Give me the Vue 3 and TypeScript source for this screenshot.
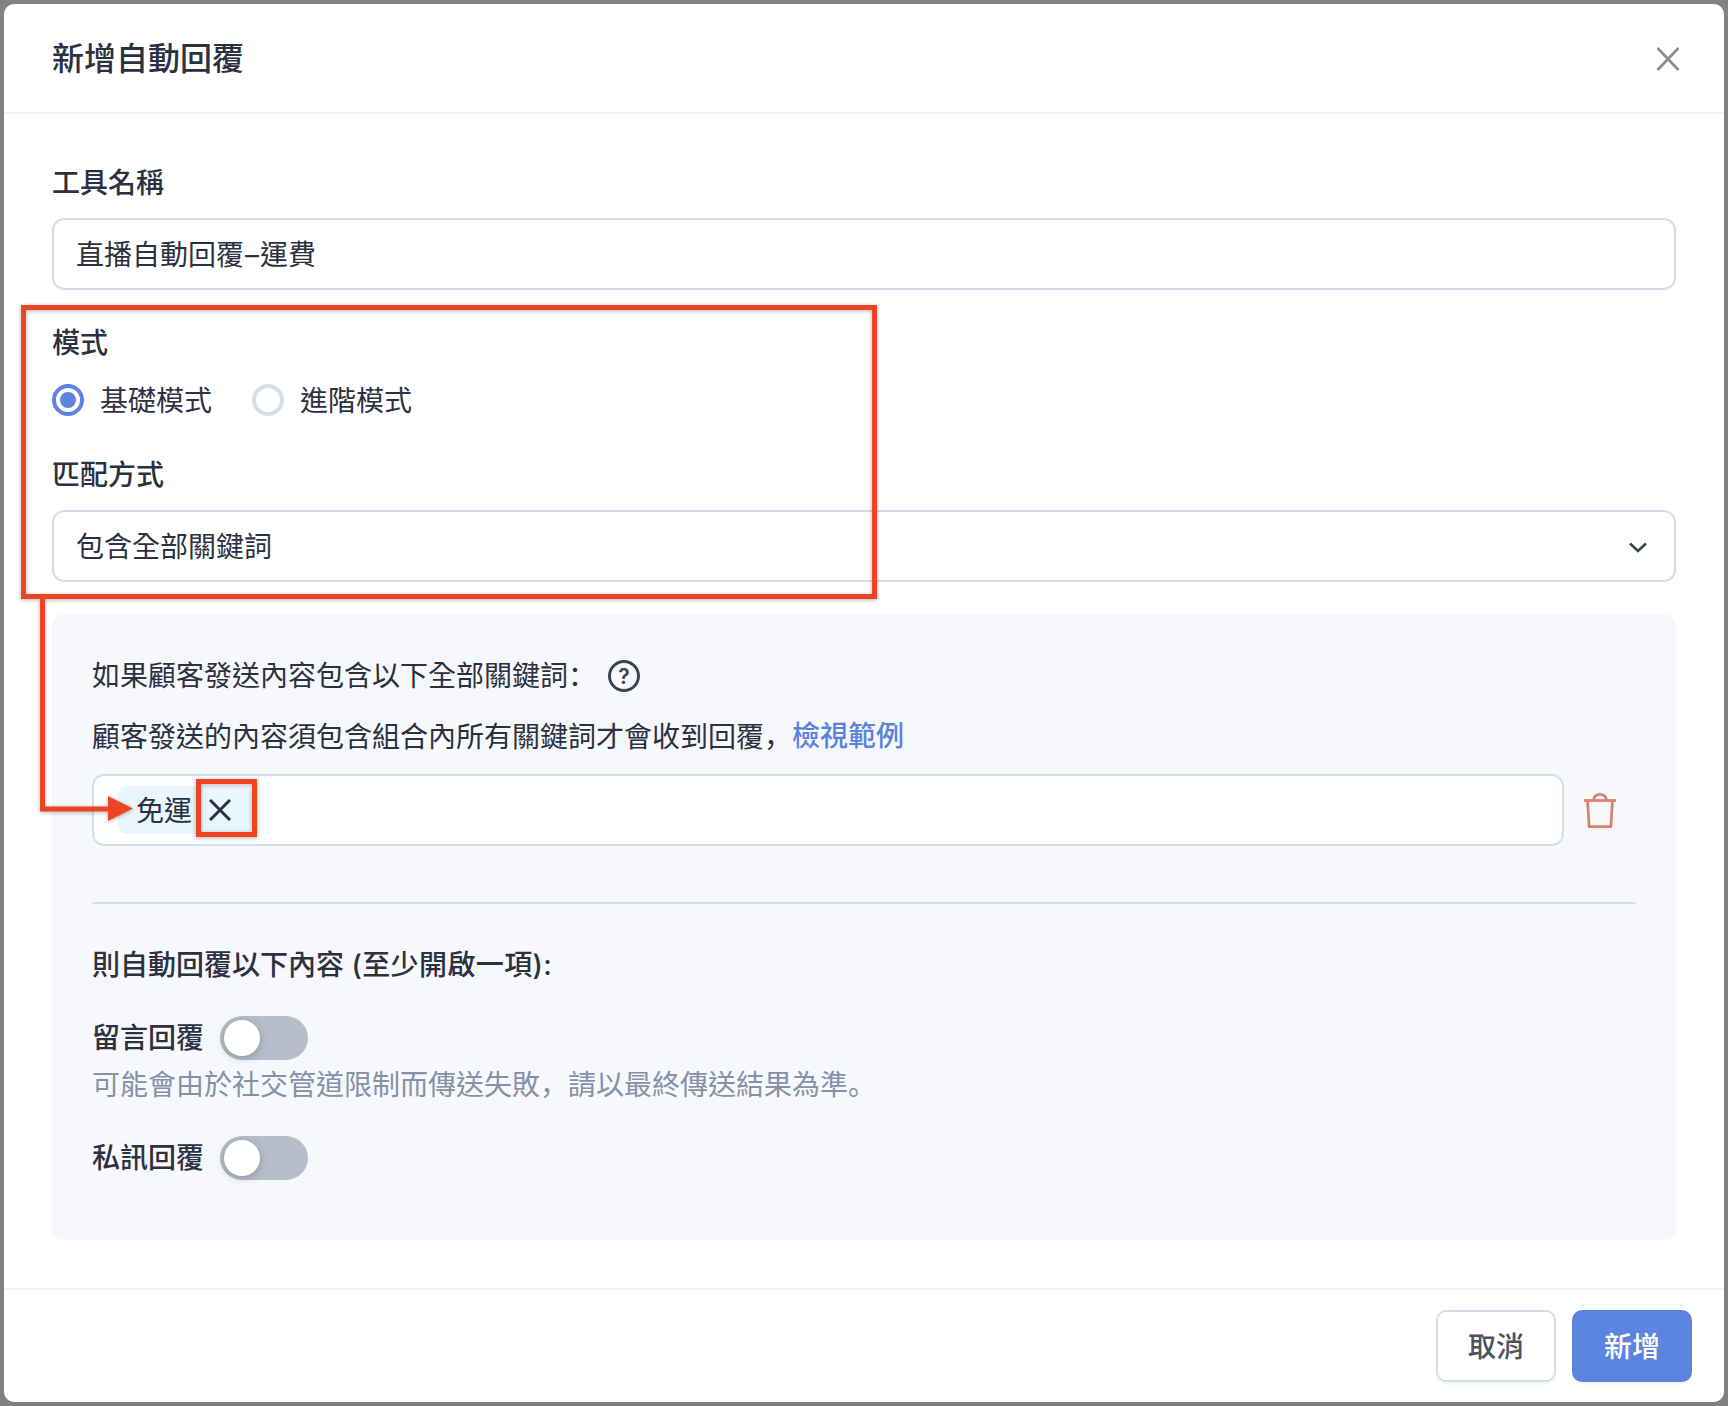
<script setup lang="ts">
const switches: { label: string; hint?: string }[] = [
  { label: '留言回覆', hint: '可能會由於社交管道限制而傳送失敗，請以最終傳送結果為準。' },
  { label: '私訊回覆' }
]
</script>

<template>
  <div class="page">
    <div class="modal">
      <header class="head">
        <h1 class="title">新增自動回覆</h1>
        <svg class="close" width="24" height="24" viewBox="0 0 24 24" fill="none" stroke="#8c8c8c" stroke-width="2.6">
          <path d="M1.5 1 L22.5 23 M22.5 1 L1.5 23" />
        </svg>
      </header>

      <main class="body">
        <label class="label">工具名稱</label>
        <div class="field"><span class="val">直播自動回覆<span class="dash">–</span>運費</span></div>

        <label class="label mode">模式</label>
        <div class="radios">
          <span class="radio on"><i></i></span><span class="rtext">基礎模式</span>
          <span class="radio"></span><span class="rtext">進階模式</span>
        </div>

        <label class="label match">匹配方式</label>
        <div class="field select">
          <span class="val">包含全部關鍵詞</span>
          <svg class="chev" width="18" height="11" viewBox="0 0 18 11" fill="none" stroke="#3d4452" stroke-width="2.6">
            <path d="M1 1.5 L9 9 L17 1.5" />
          </svg>
        </div>

        <section class="panel">
          <div class="line">
            <span class="lead">如果顧客發送內容包含以下全部關鍵詞<span class="pn">：</span></span>
            <span class="help">?</span>
          </div>
          <div class="line second">
            <span>顧客發送的內容須包含組合內所有關鍵詞才會收到回覆<span class="pn">，</span></span><a class="link">檢視範例</a>
          </div>
          <div class="tagrow">
            <div class="field tags">
              <span class="tag">
                <span class="tagtext">免運</span>
                <svg width="22" height="22" viewBox="0 0 22 22" fill="none" stroke="#2c3140" stroke-width="3">
                  <path d="M1 1 L21 21 M21 1 L1 21" />
                </svg>
              </span>
            </div>
            <div class="trash">
              <svg width="32" height="35" viewBox="0 0 32 35" fill="none" stroke="#da8172" stroke-width="2.8">
                <path d="M0 7.5 H32" />
                <path d="M3.5 7.5 L5.2 33.6 H26.8 L28.5 7.5" />
                <path d="M9.5 7 A6.5 5.6 0 0 1 22.5 7" />
              </svg>
            </div>
          </div>
          <hr class="rule" />
          <h2 class="then">則自動回覆以下內容 <span class="wide">(至少開啟一項):</span></h2>
          <div v-for="s in switches" :key="s.label" class="sw">
            <div class="swrow">
              <span class="swlabel">{{ s.label }}</span>
              <span class="toggle"><i></i></span>
            </div>
            <p v-if="s.hint" class="hint">可能會由於社交管道限制而傳送失敗<span class="pn">，</span>請以最終傳送結果為準<span class="pn">。</span></p>
          </div>
        </section>
      </main>

      <footer class="foot">
        <button class="btn ghost">取消</button>
        <button class="btn primary">新增</button>
      </footer>
    </div>

    <svg class="marks" width="1728" height="1406" viewBox="0 0 1728 1406" fill="none" stroke="#ee4424" stroke-width="5">
      <rect x="23.5" y="307.5" width="851" height="289" />
      <path d="M42.5 599 V809 H110" />
      <polygon points="108,796 133,808.5 108,821" fill="#ee4424" stroke="none" />
      <rect x="198.5" y="781.5" width="56" height="53" />
    </svg>
  </div>
</template>

<style>
html, body { margin: 0; background: #808181; }
</style>

<style scoped>
.page {
  position: relative;
  width: 1728px;
  height: 1406px;
  padding: 4px;
  box-sizing: border-box;
  font-family: Inter, "Noto Sans CJK TC", sans-serif;
  font-size: 28px;
  line-height: 40px;
  color: #2c3140;
}
.modal {
  height: 100%;
  background: #fff;
  border-radius: 10px;
  display: flex;
  flex-direction: column;
  overflow: hidden;
}
.head {
  height: 108px;
  flex: none;
  display: flex;
  align-items: center;
  justify-content: space-between;
  padding: 0 44px 0 48px;
  border-bottom: 2px solid #f0f1f3;
}
.title { margin: 2px 0 0; font-size: 32px; font-weight: 500; line-height: 44px; }
.close { margin-top: 2px; }
.body { flex: 1; padding: 49px 48px 0; display: flex; flex-direction: column; }
.label { font-weight: 500; margin-bottom: 15px; }
.mode { margin-top: 33px; margin-bottom: 17px; }
.match { margin-top: 35px; }
.field {
  height: 72px;
  box-sizing: border-box;
  border: 2px solid #d5dee8;
  border-radius: 12px;
  background: #fff;
  padding: 0 24px;
  display: flex;
  align-items: center;
  flex: none;
}
.val { margin-left: -2px; padding-top: 2px; }
.dash { padding: 0 1px; }
.chev { margin-top: 2px; }
.select { justify-content: space-between; padding-right: 27px; }
.radios { display: flex; align-items: center; height: 40px; flex: none; }
.radio {
  width: 32px;
  height: 32px;
  box-sizing: border-box;
  border: 4px solid #d5dee8;
  border-radius: 50%;
  display: flex;
  align-items: center;
  justify-content: center;
}
.radio.on { border-color: #5b84de; }
.radio.on i { width: 16px; height: 16px; border-radius: 50%; background: #5b84de; }
.rtext { margin-left: 16px; margin-right: 40px; padding-top: 2px; }
.panel {
  margin-top: 32px;
  background: #f6f8fc;
  border-radius: 12px;
  padding: 42px 40px 0;
  height: 626px;
  box-sizing: border-box;
}
.line { display: flex; align-items: center; height: 40px; }
.lead { margin-top: -2px; }
.second { margin-top: 20px; }
.pn { font-family: "Noto Sans CJK SC", sans-serif; }
.help {
  width: 32px;
  height: 32px;
  box-sizing: border-box;
  border: 3px solid #3d4452;
  border-radius: 50%;
  margin-left: 12px;
  display: flex;
  align-items: center;
  justify-content: center;
  font-size: 21px;
  font-weight: 600;
  line-height: 1;
  color: #3d4452;
}
.link { color: #5b84de; font-weight: 500; }
.tagrow { display: flex; margin-top: 18px; }
.tags { flex: 1; }
.tag {
  height: 48px;
  display: flex;
  align-items: center;
  background: #e9f6fe;
  border-radius: 8px;
  padding: 0 21px 0 18px;
  gap: 17px;
}
.tagtext { padding-top: 2px; }
.trash { width: 72px; flex: none; padding-left: 20px; box-sizing: border-box; padding-top: 19px; }
.rule { border: 0; height: 2px; background: #d5dee8; margin: 56px 0 0; }
.then { margin: 41px 0 0; font-size: 28px; font-weight: 500; line-height: 40px; }
.wide { letter-spacing: 0.4px; }
.sw { margin-top: 31px; }
.swrow { display: flex; align-items: center; height: 44px; }
.swlabel { font-weight: 500; margin-right: 16px; }
.toggle {
  width: 88px;
  height: 44px;
  border-radius: 22px;
  background: #b7bdc9;
  padding: 4px;
  box-sizing: border-box;
  display: block;
}
.toggle i {
  display: block;
  width: 36px;
  height: 36px;
  border-radius: 50%;
  background: #fff;
  box-shadow: 0 2px 8px rgba(40, 50, 70, 0.3);
}
.hint { margin: 3px 0 0; color: #8491a6; }
.foot {
  flex: none;
  height: 114px;
  box-sizing: border-box;
  border-top: 2px solid #f0f1f3;
  padding: 20px 32px 20px 0;
  display: flex;
  justify-content: flex-end;
  gap: 16px;
}
.btn {
  width: 120px;
  height: 72px;
  border-radius: 10px;
  font: inherit;
  font-weight: 500;
  box-sizing: border-box;
  padding: 2px 0 0;
  box-shadow: 0 3px 3px rgba(60, 70, 90, 0.05);
}
.ghost { background: #fff; border: 2px solid #d5dee8; color: #4d5361; }
.primary { background: #5b84de; border: 0; color: #fff; }
.marks {
  position: absolute;
  left: 0;
  top: 0;
  pointer-events: none;
  filter: drop-shadow(0 1px 2px rgba(0, 0, 0, 0.3));
}
</style>
